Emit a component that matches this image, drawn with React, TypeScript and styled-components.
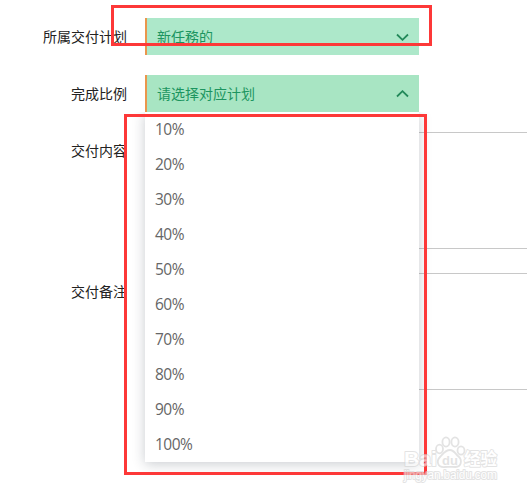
import React from "react"
import styled, { createGlobalStyle } from "styled-components"

const GlobalStyle = createGlobalStyle`
  * {
    box-sizing: border-box;
  }
  body {
    margin: 0;
    background: #fff;
    overflow: hidden;
    font-family: "Open Sans", "Noto Sans CJK SC", sans-serif;
  }
`

const Page = styled.div`
  position: relative;
  width: 527px;
  height: 494px;
  padding-top: 18px;
  overflow: hidden;
`

const Form = styled.div`
  display: flex;
  flex-direction: column;
  gap: 20px;
`

const Row = styled.div<{ $last?: boolean }>`
  display: flex;
  align-items: flex-start;
  margin-top: ${p => (p.$last ? "4px" : "0")};
`

const Label = styled.label`
  flex: none;
  width: 127px;
  margin-right: 18px;
  font-family: "Noto Sans CJK SC", sans-serif;
  font-size: 14px;
  line-height: 37px;
  text-align: right;
  color: #222;
`

const SelectWrap = styled.div`
  position: relative;
  width: 274px;
`

const SelectBox = styled.div<{ $open?: boolean }>`
  display: flex;
  align-items: center;
  justify-content: space-between;
  height: 37px;
  padding: 0 10px;
  border-left: 2px solid #ea964c;
  background: ${p => (p.$open ? "#a8e5c3" : "#ade8ca")};
  color: #1c9560;
  font-family: "Noto Sans CJK SC", sans-serif;
  font-size: 14px;
  line-height: 37px;
`

const Menu = styled.ul`
  position: absolute;
  top: 37px;
  left: 0;
  z-index: 2;
  width: 274px;
  margin: 0;
  padding: 0;
  list-style: none;
  background: #fff;
  box-shadow: 0 2px 12px rgba(30, 40, 60, 0.24);
  clip-path: inset(0 -14px -14px -14px);
`

const Option = styled.li`
  height: 35px;
  padding-left: 10px;
  font-size: 15.5px;
  line-height: 35px;
  letter-spacing: -0.5px;
  color: #666;
`

const TextArea = styled.div`
  flex: none;
  width: 440px;
  height: 117px;
  border: 1px solid #c8c8c8;
`

const Mark = styled.div<{ $x: number; $y: number; $w: number; $h: number }>`
  position: absolute;
  z-index: 3;
  left: ${p => p.$x}px;
  top: ${p => p.$y}px;
  width: ${p => p.$w}px;
  height: ${p => p.$h}px;
  border: 3px solid #fd3838;
`

const Watermark = styled.svg`
  position: absolute;
  z-index: 4;
  left: 400px;
  top: 432px;
  opacity: 0.6;

  text {
    paint-order: stroke;
    stroke-linejoin: round;
  }
`

const Arrow = ({ up }: { up?: boolean }) => (
  <svg width="13" height="8" viewBox="0 0 13 8" fill="none" stroke="#23895a" strokeWidth="1.8">
    <path d={up ? "M1 6.5 6.5 1.2 12 6.5" : "M1 1.5 6.5 6.8 12 1.5"} />
  </svg>
)

const Logo = () => (
  <Watermark width="104" height="54" viewBox="0 0 104 54" fill="#fff" stroke="#d2d2d2" strokeWidth="1.8">
    <text x="4" y="34" fontFamily="Liberation Sans" fontWeight="bold" fontSize="20" textLength="33" lengthAdjust="spacingAndGlyphs">Bai</text>
    <ellipse cx="39.5" cy="17" rx="3.5" ry="4.3" />
    <ellipse cx="46" cy="10" rx="3.6" ry="4.6" />
    <ellipse cx="55" cy="10" rx="3.6" ry="4.6" />
    <ellipse cx="61" cy="18.5" rx="3.5" ry="4.2" />
    <path d="M50 18c4 0 5.500 4 8.500 6.500 4 3.500 3 10.500-3 10.500-3 0-8-.5-11 0-7 .5-8.500-6-4.500-10C43 22 45 18 50 18Z" />
    <text x="42" y="33" fontFamily="Liberation Sans" fontWeight="bold" fontSize="13" fill="#d2d2d2" stroke="none">du</text>
    <text x="64" y="33" fontFamily="Noto Sans CJK SC" fontWeight="bold" fontSize="16.500">经验</text>
    <text x="4" y="47" fontFamily="Liberation Sans" fontSize="12" textLength="93" strokeWidth="2">jingyan.baidu.com</text>
  </Watermark>
)

const options = ["10%", "20%", "30%", "40%", "50%", "60%", "70%", "80%", "90%", "100%"]

export default function App() {
  return (
    <Page>
      <GlobalStyle />
      <Form>
        <Row>
          <Label>所属交付计划</Label>
          <SelectWrap>
            <SelectBox>
              新任務的
              <Arrow />
            </SelectBox>
          </SelectWrap>
        </Row>
        <Row>
          <Label>完成比例</Label>
          <SelectWrap>
            <SelectBox $open>
              请选择对应计划
              <Arrow up />
            </SelectBox>
            <Menu>
              {options.map(o => (
                <Option key={o}>{o}</Option>
              ))}
            </Menu>
          </SelectWrap>
        </Row>
        <Row>
          <Label>交付内容</Label>
          <TextArea />
        </Row>
        <Row $last>
          <Label>交付备注</Label>
          <TextArea />
        </Row>
      </Form>
      <Mark $x={111} $y={5} $w={321} $h={41} />
      <Mark $x={124} $y={114} $w={303} $h={361} />
      <Logo />
    </Page>
  )
}
